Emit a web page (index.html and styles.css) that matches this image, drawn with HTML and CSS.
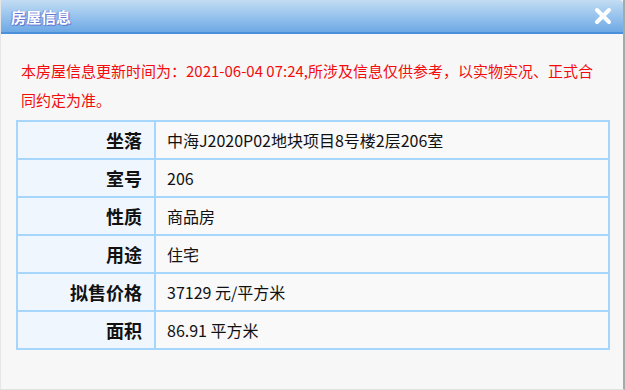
FILE: index.html
```html
<!DOCTYPE html>
<html lang="zh-CN">
<head>
<meta charset="utf-8">
<title>房屋信息</title>
<link rel="stylesheet" href="styles.css">
</head>
<body>
<div class="dialog">
  <div class="titlebar">
    <span class="title">房屋信息</span>
    <span class="close" aria-label="关闭">
      <svg width="18" height="18" viewBox="0 0 18 18"><path d="M3 3 L15 15 M15 3 L3 15" stroke="#ffffff" stroke-width="4" stroke-linecap="round"/></svg>
    </span>
  </div>
  <div class="content">
    <p class="notice">本房屋信息更新时间为：2021-06-04 07:24,所涉及信息仅供参考，以实物实况、正式合同约定为准。</p>
    <table class="info">
      <tr><th>坐落</th><td>中海J2020P02地块项目8号楼2层206室</td></tr>
      <tr><th>室号</th><td>206</td></tr>
      <tr><th>性质</th><td>商品房</td></tr>
      <tr><th>用途</th><td>住宅</td></tr>
      <tr><th>拟售价格</th><td>37129 元/平方米</td></tr>
      <tr><th>面积</th><td>86.91 平方米</td></tr>
    </table>
  </div>
</div>
</body>
</html>
```
FILE: styles.css
```css
html, body {
  margin: 0;
  padding: 0;
  background: #f7f7f7;
}
.dialog {
  width: 625px;
  height: 390px;
  box-sizing: border-box;
  background: #f7f7f7;
  border-right: 2px solid #a8a8a8;
  border-bottom: 1px solid #e2e2e2;
  border-left: 1px solid #e6e6e6;
  font-family: "Noto Sans CJK SC", "Noto Sans", sans-serif;
}
.titlebar {
  height: 34px;
  box-sizing: border-box;
  display: flex;
  align-items: center;
  justify-content: space-between;
  padding: 0 11px 0 10px;
  background: linear-gradient(to bottom, #c3dcf3 0%, #9cc6ee 45%, #6ea9e5 100%);
  border-bottom: 2px solid #4c90dc;
  border-top-right-radius: 4px;
}
.title {
  color: #ffffff;
  font-weight: bold;
  font-size: 15px;
  text-shadow: 1px 1px 1px #5a6fd0, -1px 0 1px #7a88d8;
}
.close {
  display: flex;
  width: 18px;
  height: 18px;
}
.content {
  padding: 22px 16px 0 15px;
}
.notice {
  margin: 0 0 6px 0;
  padding: 0 12px 0 5px;
  color: #f40c0c;
  font-size: 15px;
  line-height: 29px;
}
.info {
  width: 594px;
  border-collapse: collapse;
  font-size: 16px;
  color: #111111;
}
.info th, .info td {
  border: 2px solid #a6d6fb;
  height: 36px;
  padding: 0;
}
.info th {
  width: 124px;
  background: #eff6fe;
  text-align: right;
  padding-right: 12px;
  font-size: 18px;
  font-weight: bold;
}
.info td {
  background: #f9f9f9;
  text-align: left;
  padding-left: 11px;
}
```
